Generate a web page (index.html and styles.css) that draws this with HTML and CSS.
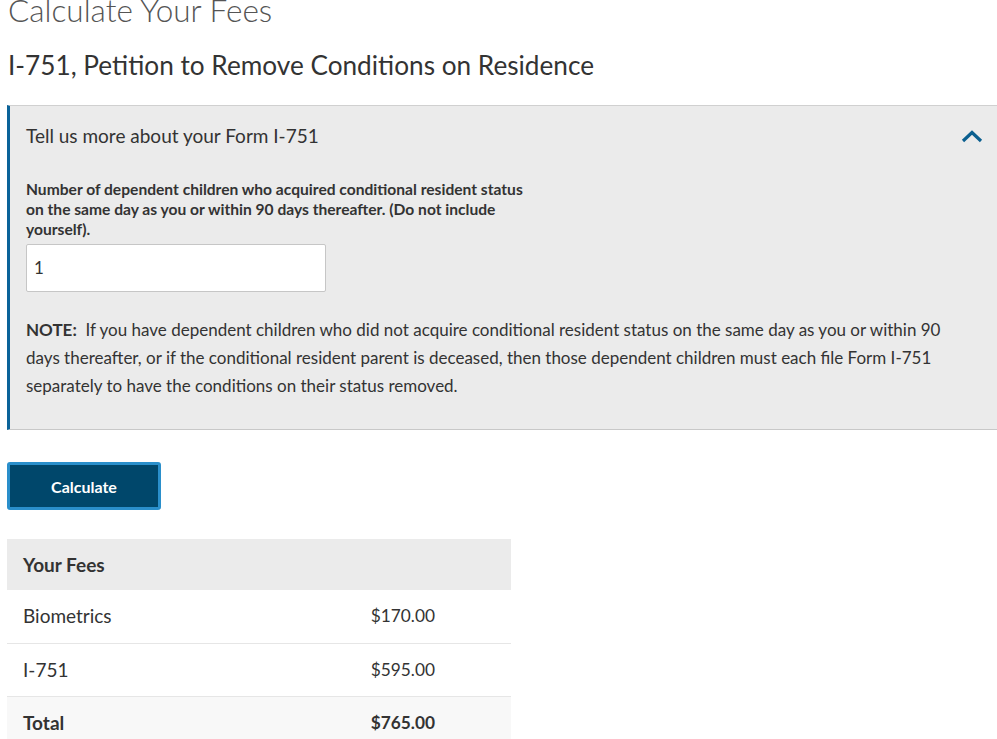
FILE: index.html
```html
<!DOCTYPE html>
<html>
<head>
<meta charset="utf-8">
<link rel="stylesheet" href="styles.css">
</head>
<body>
<div class="page">
  <h1 class="title">Calculate Your Fees</h1>
  <h2 class="subtitle">I-751, Petition to Remove Conditions on Residence</h2>

  <section class="panel">
    <div class="panel-head">
      <span class="panel-title">Tell us more about your Form I-751</span>
      <svg class="chevron" width="22" height="14" viewBox="0 0 22 14"><path d="M2 12 L11 3.5 L20 12" fill="none" stroke="#0b5f8f" stroke-width="3.2"/></svg>
    </div>
    <div class="panel-body">
      <label class="field-label" for="kids">Number of dependent children who acquired conditional resident status on the same day as you or within 90 days thereafter. (Do not include yourself).</label>
      <div class="input-box" id="kids">1</div>
      <p class="note"><b>NOTE:</b>&nbsp; If you have dependent children who did not acquire conditional resident status on the same day as you or within 90 days thereafter, or if the conditional resident parent is deceased, then those dependent children must each file Form I-751 separately to have the conditions on their status removed.</p>
    </div>
  </section>

  <button class="calc-btn">Calculate</button>

  <div class="fees">
    <div class="fees-head">Your Fees</div>
    <div class="fees-row"><span>Biometrics</span><span class="amt">$170.00</span></div>
    <div class="fees-row"><span>I-751</span><span class="amt">$595.00</span></div>
    <div class="fees-row total"><span>Total</span><span class="amt">$765.00</span></div>
  </div>
</div>
</body>
</html>
```

FILE: styles.css
```css
html, body {
  margin: 0;
  padding: 0;
  background: #fff;
}
body {
  font-family: Lato, "Liberation Sans", sans-serif;
  color: #333;
  overflow: hidden;
}
.page {
  padding: 0 0 0 7px;
  margin-top: -10px;
}
.title {
  margin: 0 0 0 1px;
  font-weight: 300;
  font-size: 31.5px;
  line-height: 40px;
  color: #555;
}
.subtitle {
  margin: 19px 0 0 1px;
  font-weight: 400;
  font-size: 26.2px;
  line-height: 32px;
  color: #333;
}
.panel {
  margin-top: 24px;
  background: #ebebeb;
  border-top: 1px solid #d0d0d0;
  border-bottom: 1px solid #c8c8c8;
  border-left: 3px solid #0b6399;
  padding: 0 14px 0 16px;
}
.panel-head {
  display: flex;
  justify-content: space-between;
  align-items: center;
  height: 58px;
}
.panel-title {
  font-size: 19px;
  color: #333;
}
.chevron {
  display: block;
  margin-top: 1px;
}
.panel-body {
  padding: 15px 0 29px 0;
}
.field-label {
  display: block;
  width: 500px;
  font-size: 15.6px;
  line-height: 20px;
  font-weight: 700;
  color: #333;
}
.input-box {
  margin-top: 5px;
  background: #fff;
  border: 1px solid #c6c6c6;
  border-radius: 2px;
  font-family: Lato, "Liberation Sans", sans-serif;
  font-size: 17px;
  line-height: 46px;
  padding-left: 7px;
  box-sizing: border-box;
  width: 300px;
  height: 48px;
}
.note {
  margin: 24px 0 0 0;
  font-size: 17px;
  line-height: 28px;
  color: #333;
  max-width: 935px;
}
.note b {
  font-weight: 700;
}
.calc-btn {
  display: block;
  margin-top: 32px;
  width: 154px;
  height: 48px;
  background: #00476b;
  border: 3px solid #2a8fcb;
  border-radius: 3px;
  color: #fff;
  font-family: Lato, "Liberation Sans", sans-serif;
  font-weight: 700;
  font-size: 16px;
  padding: 0;
}
.fees {
  margin-top: 29px;
  width: 504px;
}
.fees-head {
  background: #ebebeb;
  height: 51px;
  line-height: 51px;
  padding-left: 16px;
  font-weight: 700;
  font-size: 19px;
  color: #333;
}
.fees-row {
  display: flex;
  justify-content: space-between;
  height: 52px;
  line-height: 52px;
  padding: 0 76px 0 16px;
  font-size: 19px;
  color: #333;
  border-top: 1px solid #e6e6e6;
}
.fees-row:nth-child(2) {
  border-top: none;
  height: 53px;
}
.fees-row .amt {
  font-size: 17.3px;
}
.fees-row.total {
  background: #f8f8f8;
  font-weight: 700;
}
```
